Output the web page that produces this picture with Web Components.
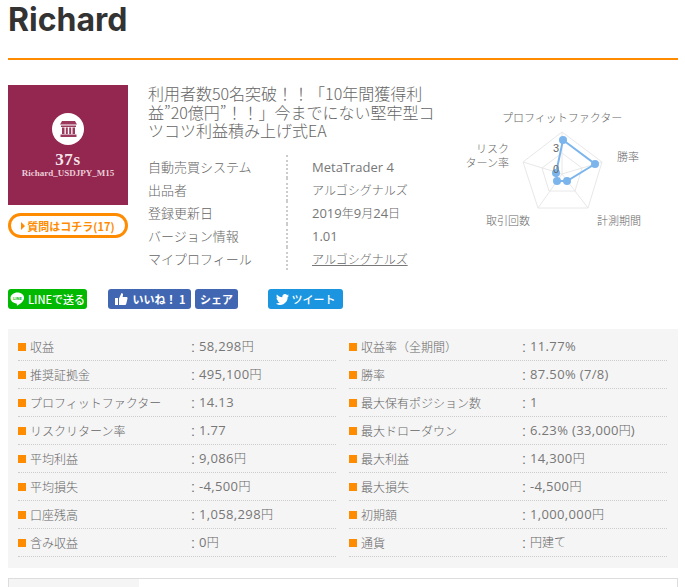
<!DOCTYPE html>
<html lang="ja">
<head>
<meta charset="utf-8">
<title>Richard</title>
<style>
  html, body { margin: 0; padding: 0; background: #fff; overflow: hidden; }
  body {
    height: 587px;
    font-family: "Noto Sans CJK JP", "Open Sans", sans-serif;
    color: #666;
  }
</style>
</head>
<body>
<ea-page>
  <ea-heading>Richard</ea-heading>
  <ea-summary></ea-summary>
  <social-bar></social-bar>
  <stat-table>
    <stat-row label="収益" value="58,298円"></stat-row>
    <stat-row label="収益率（全期間）" value="11.77%"></stat-row>
    <stat-row label="推奨証拠金" value="495,100円"></stat-row>
    <stat-row label="勝率" value="87.50% (7/8)"></stat-row>
    <stat-row label="プロフィットファクター" value="14.13"></stat-row>
    <stat-row label="最大保有ポジション数" value="1"></stat-row>
    <stat-row label="リスクリターン率" value="1.77"></stat-row>
    <stat-row label="最大ドローダウン" value="6.23% (33,000円)"></stat-row>
    <stat-row label="平均利益" value="9,086円"></stat-row>
    <stat-row label="最大利益" value="14,300円"></stat-row>
    <stat-row label="平均損失" value="-4,500円"></stat-row>
    <stat-row label="最大損失" value="-4,500円"></stat-row>
    <stat-row label="口座残高" value="1,058,298円"></stat-row>
    <stat-row label="初期額" value="1,000,000円"></stat-row>
    <stat-row label="含み収益" value="0円"></stat-row>
    <stat-row label="通貨" value="円建て"></stat-row>
  </stat-table>
  <tab-box></tab-box>
</ea-page>

<script>
// latin runs stay a bit larger than the kana/kanji around them, like the original font
const mixed = text => text.replace(/[^\x00-\x7f]+/g, m => `<span class="j">${m}</span>`);

class EaPage extends HTMLElement {
  constructor() {
    super();
    this.attachShadow({ mode: 'open' });
    this.shadowRoot.innerHTML = `
      <style>
        :host { display: block; padding: 0 7px 0 8px; }
      </style>
      <slot></slot>
    `;
  }
}

class EaHeading extends HTMLElement {
  constructor() {
    super();
    this.attachShadow({ mode: 'open' });
    this.shadowRoot.innerHTML = `
      <style>
        :host {
          display: block;
          height: 58px;
          border-bottom: 2px solid #ff8c00;
          font: bold 32px/40px Inter, sans-serif;
          color: #333;
        }
      </style>
      <slot></slot>
    `;
  }
}

class EaSummary extends HTMLElement {
  constructor() {
    super();
    this.attachShadow({ mode: 'open' });
    const rows = [
      ['自動売買システム', mixed('MetaTrader 4')],
      ['出品者', mixed('アルゴシグナルズ')],
      ['登録更新日', mixed('2019年9月24日')],
      ['バージョン情報', mixed('1.01')],
      ['マイプロフィール', `<u>${mixed('アルゴシグナルズ')}</u>`]
    ];
    this.shadowRoot.innerHTML = `
      <style>
        :host {
          display: grid;
          grid-template-columns: 120px 300px 1fr;
          column-gap: 20px;
          padding-top: 25px;
          font-family: "Noto Sans CJK JP", sans-serif;
          color: #666;
        }
        .thumb {
          height: 120px;
          background: #93274f;
          display: flex;
          flex-direction: column;
          align-items: center;
          padding-top: 28px;
          box-sizing: border-box;
          font-family: "Liberation Serif", serif;
          font-weight: bold;
        }
        .badge {
          width: 32px;
          height: 32px;
          border-radius: 50%;
          background: #fff;
          display: flex;
          align-items: center;
          justify-content: center;
        }
        .num { font-size: 17px; line-height: 17px; margin-top: 6px; color: #f4e4ea; letter-spacing: .7px; }
        .code { font-size: 9px; line-height: 9px; margin-top: 1px; color: #eacbd6; white-space: nowrap; }
        .ask {
          display: flex;
          align-items: center;
          justify-content: center;
          gap: 2px;
          height: 25px;
          margin-top: 8px;
          box-sizing: border-box;
          border: 3px solid #ff8c00;
          border-radius: 13px;
          color: #ff8c00;
          font-size: 11px;
          font-weight: bold;
        }
        .ask i {
          width: 0; height: 0;
          border-left: 4px solid #ff8c00;
          border-top: 4px solid transparent;
          border-bottom: 4px solid transparent;
        }
        h2 {
          margin: -1px 0 15px;
          font-size: 16px;
          font-weight: 300;
          line-height: 18.5px;
          color: #666;
        }
        .info { display: grid; grid-template-columns: 140px 1fr; font-size: 13px; font-weight: 300; }
        .info div { height: 23px; line-height: 23px; white-space: nowrap; }
        .info .k { border-right: 2px dotted #ccc; box-sizing: border-box; }
        .info .v { padding-left: 24px; line-height: 24px; font-family: "Open Sans", "Noto Sans CJK JP", sans-serif; font-weight: 400; color: #777; }
        .j { font-family: "Noto Sans CJK JP", sans-serif; font-size: 12px; font-weight: 300; color: #666; }
        .radar { margin-left: -28px; }
        svg.radar text { font-family: "Liberation Sans", "Noto Sans CJK JP", sans-serif; font-size: 11px; font-weight: 300; fill: #666; }
      </style>
      <div>
        <div class="thumb">
          <div class="badge">
            <svg width="19" height="16" viewBox="0 0 19 16" fill="#9c3a5e">
              <path d="M3 0H16L18 3.500H1Z"/>
              <path d="M2 4.500H17V6H2z"/>
              <path d="M3 6.500H5.500V13H3zM6.800 6.500H8.800V13H6.800zM10.200 6.500H12.200V13H10.200zM13.500 6.500H16V13H13.500z"/>
              <path d="M1.500 13.500H17.500V16H1.500z"/>
            </svg>
          </div>
          <div class="num">37s</div>
          <div class="code">Richard_USDJPY_M15</div>
        </div>
        <div class="ask"><i></i>質問はコチラ(17)</div>
      </div>
      <div>
        <h2>利用者数50名突破！！「10年間獲得利益”20億円”！！」今までにない堅牢型コツコツ利益積み上げ式EA</h2>
        <div class="info">
          ${rows.map(r => `<div class="k">${r[0]}</div><div class="v">${r[1]}</div>`).join('')}
        </div>
      </div>
      <svg class="radar" width="217" height="155" viewBox="440 85 217 155">
        <g fill="none" stroke="#e8e8e8" stroke-width="1">
          <path d="M562 132L602 162L588 208L538 208L523 162Z"/>
          <path d="M562 153L582 168L575 191L549 191L542 168Z"/>
          <path d="M562 174V132M562 174L602 162M562 174L588 208M562 174L538 208M562 174L523 162" />
        </g>
        <path d="M563 140L595 164L567 181L557 181L556 173Z" fill="none" stroke="#7cb5ec" stroke-width="2"/>
        <g fill="#7cb5ec">
          <circle cx="563" cy="140" r="4"/>
          <circle cx="595" cy="164" r="4"/>
          <circle cx="567" cy="181" r="4"/>
          <circle cx="557" cy="181" r="4"/>
          <circle cx="556" cy="173" r="4"/>
        </g>
        <text x="553" y="152">3</text>
        <text x="553" y="173">0</text>
        <text x="502" y="122">プロフィットファクター</text>
        <text x="617" y="161">勝率</text>
        <text x="597" y="225">計測期間</text>
        <text x="486" y="225">取引回数</text>
        <text text-anchor="end"><tspan x="509" y="153">リスク</tspan><tspan x="509" y="167">ターン率</tspan></text>
      </svg>
    `;
  }
}

class SocialBar extends HTMLElement {
  constructor() {
    super();
    this.attachShadow({ mode: 'open' });
    this.shadowRoot.innerHTML = `
      <style>
        :host {
          display: flex;
          margin-top: 19.5px;
          height: 20px;
          font-family: "Noto Sans CJK JP", sans-serif;
          font-size: 11px;
          font-weight: bold;
          color: #fff;
        }
        span {
          display: flex;
          align-items: center;
          justify-content: center;
          gap: 3px;
          height: 20px;
          border-radius: 3px;
          white-space: nowrap;
        }
        .line { width: 79px; background: #00b900; font-weight: 500; }
        .like { width: 83px; margin-left: 21px; background: #4267b2; gap: 5px; }
        .share { width: 43px; margin-left: 4px; background: #4267b2; }
        .tweet { width: 75px; margin-left: 30px; background: #1b95e0; font-weight: 500; }
      </style>
      <span class="line">
        <svg width="15" height="14" viewBox="0 0 15 14"><path d="M7.500.5C3.600.5.500 3 .500 6.100c0 2.800 2.500 5.100 5.800 5.500.2 0 .5.200.6.400 0 .3 0 .7-.1 1 0 .3-.1.700.6.400s3.700-2.200 5-3.700c.9-1 1.600-2.200 1.600-3.600C14.500 3 11.400.5 7.500.5z" fill="#fff"/><text x="7.500" y="7.800" font-size="4" font-weight="bold" text-anchor="middle" fill="#00b900">LINE</text></svg>
        LINEで送る
      </span>
      <span class="like">
        <svg width="14" height="14" viewBox="0 0 14 14" fill="#fff"><path d="M1 6h3v7H1zM5 6.500L7.500 1c1.200 0 1.700 1 1.500 2L8.600 5H12.500c.8 0 1.200.7 1 1.400l-1.300 5.600c-.2.600-.6 1-1.300 1H5z"/></svg>
        いいね！ 1
      </span>
      <span class="share">シェア</span>
      <span class="tweet">
        <svg width="13" height="11" viewBox="0 0 24 20" fill="#fff"><path d="M24 2.400c-.9.400-1.800.7-2.800.8 1-.6 1.800-1.600 2.200-2.700-1 .6-2 1-3.100 1.200C19.300.700 18 0 16.600 0c-2.700 0-4.900 2.200-4.900 4.900 0 .4 0 .8.100 1.100C7.700 5.800 4.100 3.800 1.700.9 1.200 1.600 1 2.500 1 3.400c0 1.700.9 3.200 2.200 4.100-.8 0-1.600-.2-2.200-.6v.1c0 2.400 1.700 4.400 3.900 4.800-.4.100-.8.200-1.300.2-.3 0-.6 0-.9-.1.600 2 2.400 3.400 4.600 3.400-1.700 1.300-3.800 2.100-6.100 2.100-.4 0-.8 0-1.200-.1C2.200 19.200 4.800 20 7.500 20c9.100 0 14-7.500 14-14v-.6c1-.7 1.800-1.600 2.500-3z"/></svg>
        ツイート
      </span>
    `;
  }
}

class StatTable extends HTMLElement {
  constructor() {
    super();
    this.attachShadow({ mode: 'open' });
    this.shadowRoot.innerHTML = `
      <style>
        :host {
          display: grid;
          grid-template-columns: 318px 318px;
          column-gap: 13px;
          margin-top: 20px;
          padding: 4px 10px 11px;
          background: #f5f5f5;
        }
      </style>
      <slot></slot>
    `;
  }
}

class StatRow extends HTMLElement {
  constructor() {
    super();
    this.attachShadow({ mode: 'open' });
    this.shadowRoot.innerHTML = `
      <style>
        :host {
          display: flex;
          align-items: center;
          height: 28px;
          padding-bottom: 1px;
          box-sizing: border-box;
          border-bottom: 1px dotted #ccc;
          font-family: "Noto Sans CJK JP", sans-serif;
          font-size: 12px;
          font-weight: 300;
          color: #666;
        }
        i { width: 8px; height: 8px; background: #ff8c00; margin: 1px 4px 0 0; flex: none; }
        .k { width: 157px; flex: none; white-space: nowrap; }
        .v { white-space: nowrap; font-family: "Open Sans", "Noto Sans CJK JP", sans-serif; font-size: 13px; font-weight: 400; letter-spacing: .35px; color: #777; }
        .j { font-family: "Noto Sans CJK JP", sans-serif; font-size: 12px; font-weight: 300; letter-spacing: 0; color: #666; }
        .c { vertical-align: -2px; }
      </style>
      <i></i><span class="k">${this.getAttribute('label')}</span><span class="v"><span class="j c">：</span>${mixed(this.getAttribute('value'))}</span>
    `;
  }
}

class TabBox extends HTMLElement {
  constructor() {
    super();
    this.attachShadow({ mode: 'open' });
    this.shadowRoot.innerHTML = `
      <style>
        :host {
          display: block;
          margin-top: 10px;
          height: 30px;
          box-sizing: border-box;
          border: 1px solid #ddd;
        }
        div { width: 130px; height: 100%; background: #f5f5f5; }
      </style>
      <div></div>
    `;
  }
}

customElements.define('ea-page', EaPage);
customElements.define('ea-heading', EaHeading);
customElements.define('ea-summary', EaSummary);
customElements.define('social-bar', SocialBar);
customElements.define('stat-table', StatTable);
customElements.define('stat-row', StatRow);
customElements.define('tab-box', TabBox);
</script>
</body>
</html>
